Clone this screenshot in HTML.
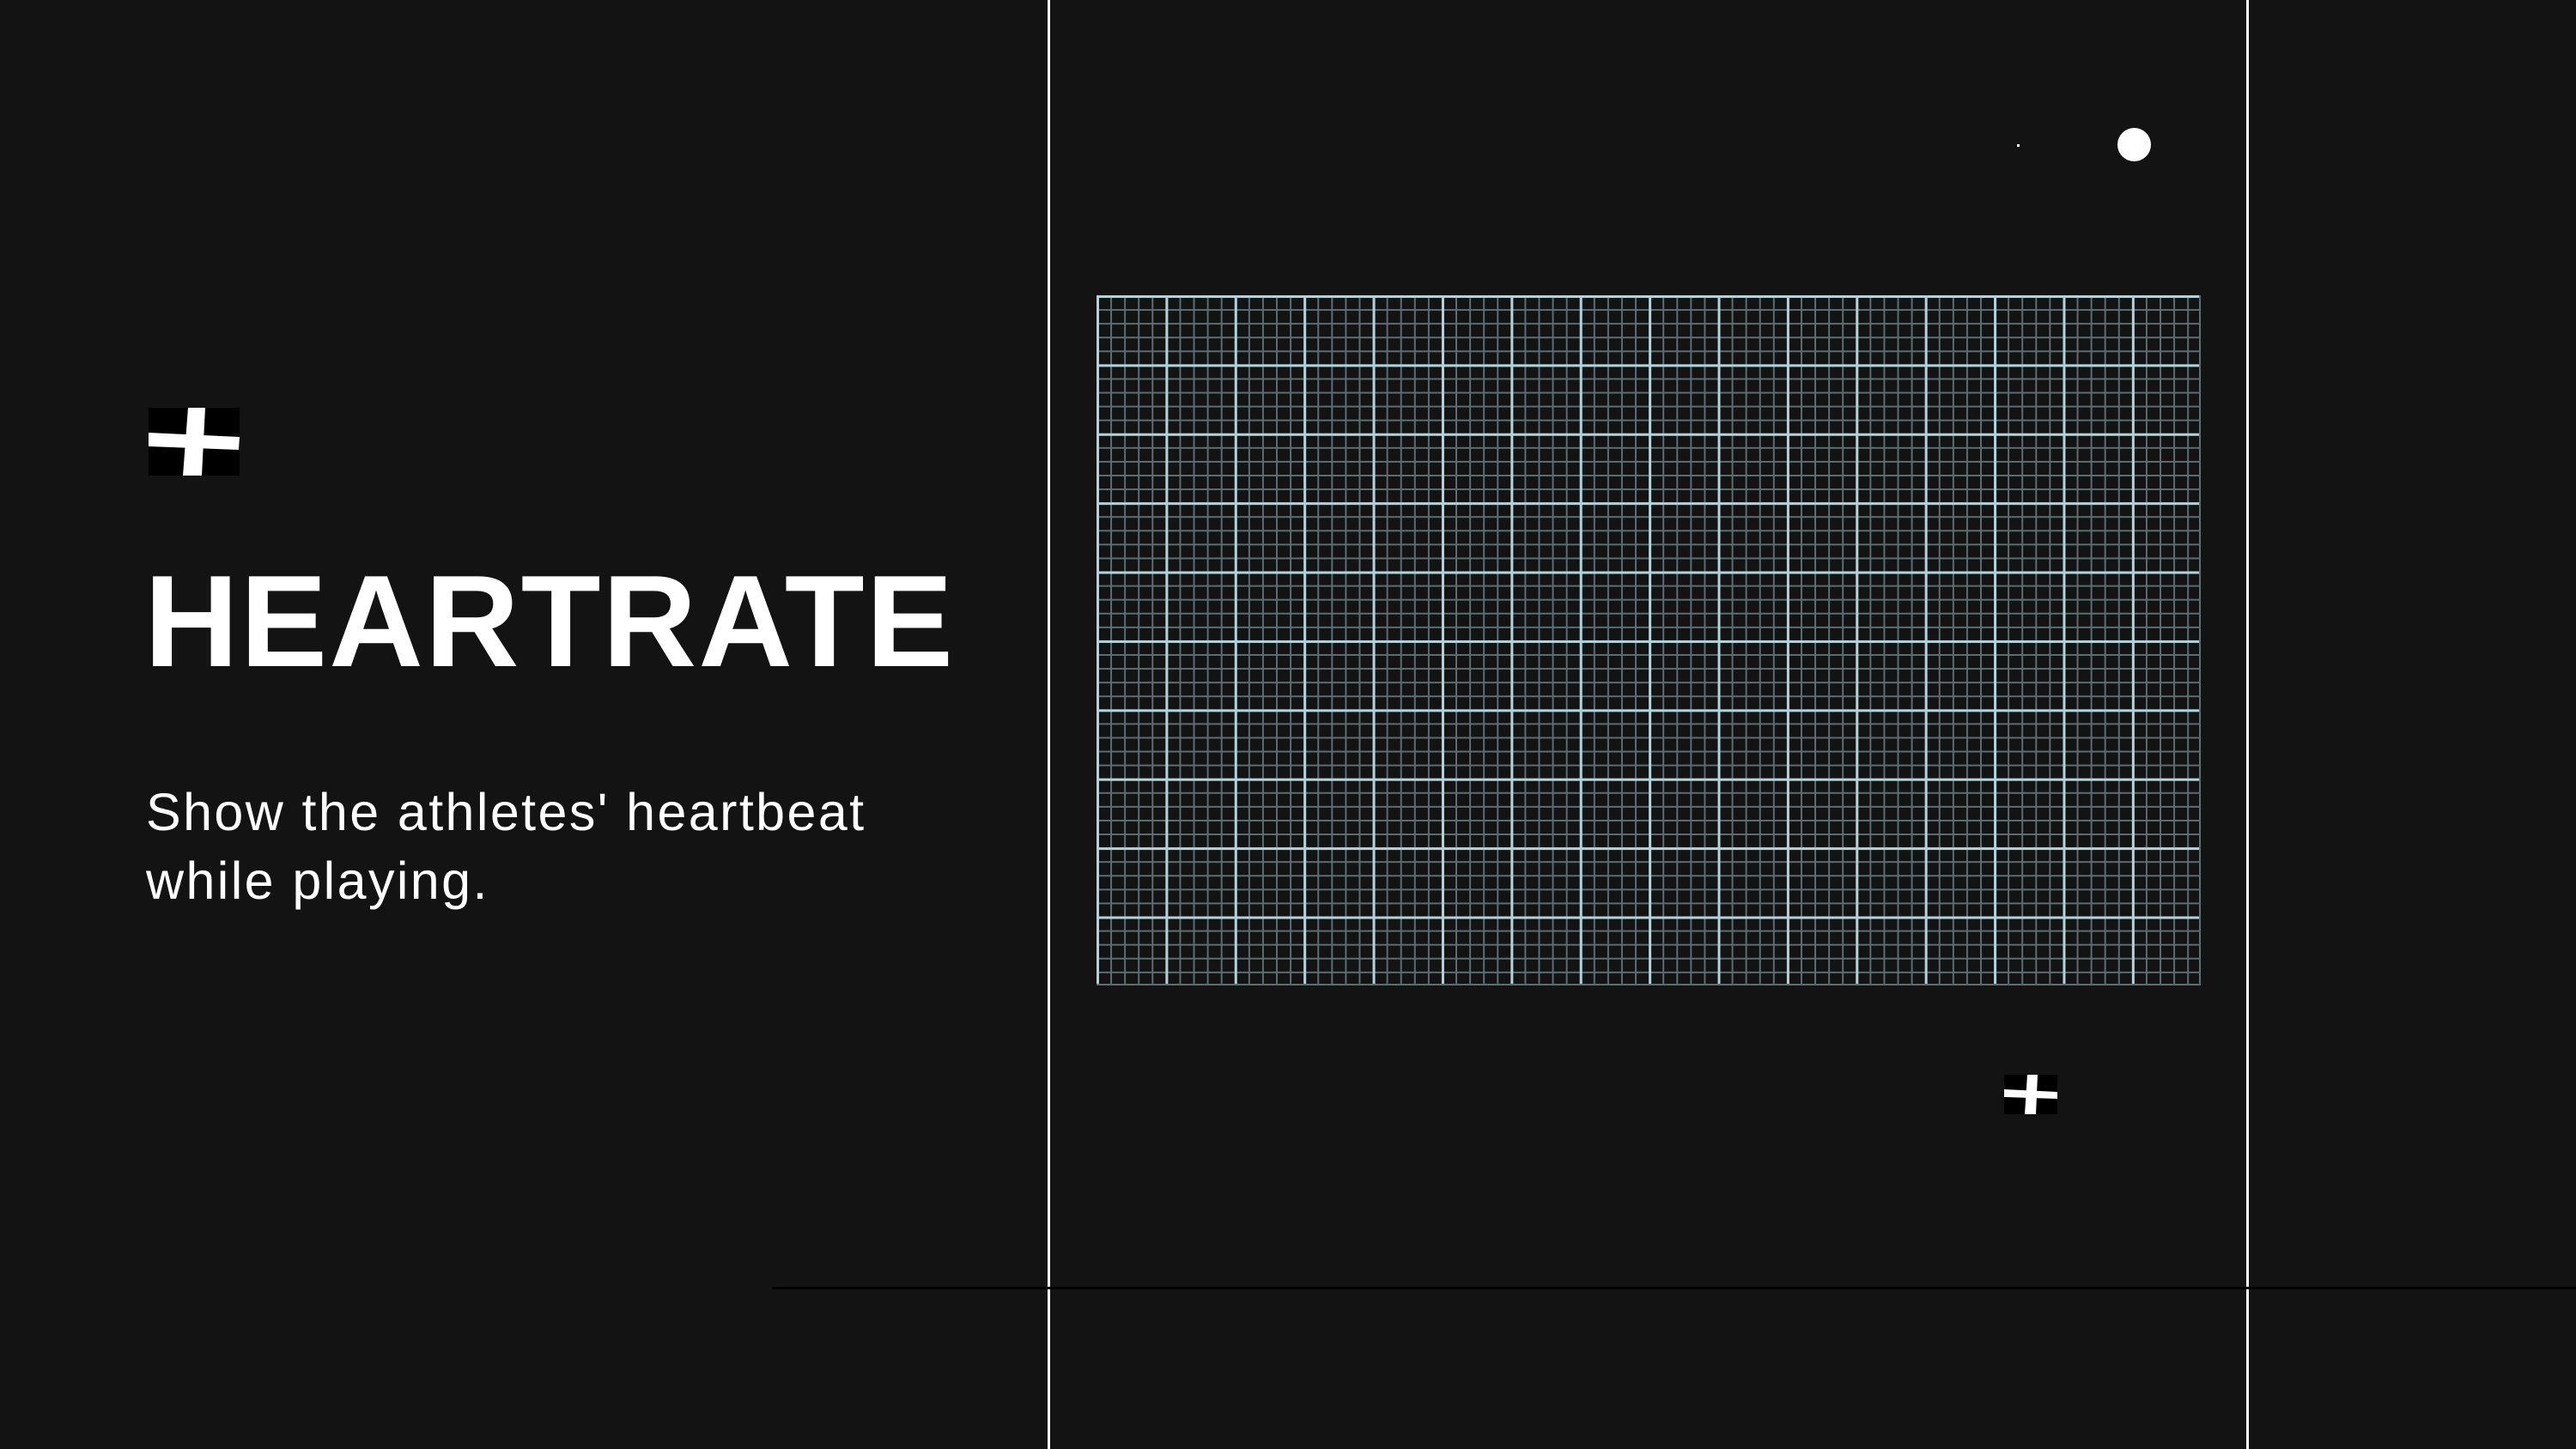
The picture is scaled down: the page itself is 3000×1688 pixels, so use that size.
<!DOCTYPE html>
<html><head><style>
html,body{margin:0;padding:0;background:#131313;width:3000px;height:1688px;overflow:hidden;position:relative;font-family:"Liberation Sans",sans-serif;}
.a{position:absolute}
.grid{left:1277px;top:344px;width:1286px;height:804px;
background-image:
linear-gradient(to right,#b0d3db 3px,transparent 3px),
linear-gradient(to bottom,#b0d3db 3px,transparent 3px),
linear-gradient(to right,#5d6e73 2px,transparent 2px),
linear-gradient(to bottom,#5d6e73 2px,transparent 2px);
background-size:80.4px 80.4px,80.4px 80.4px,16.08px 16.08px,16.08px 16.08px;
border-right:2px solid #5d6e73;border-bottom:2px solid #5d6e73;box-sizing:border-box;}
</style></head><body>
<div class="a" style="left:1220px;top:0;width:3px;height:1688px;background:#fff"></div>
<div class="a" style="left:2616px;top:0;width:3px;height:1688px;background:#fff"></div>
<div class="a" style="left:899px;top:1499px;width:2101px;height:3px;background:#000"></div>
<div class="a grid"></div>
<div class="a" style="left:2466px;top:149px;width:39px;height:39px;border-radius:50%;background:#fff"></div>
<div class="a" style="left:2349px;top:168px;width:3px;height:3px;background:#fff"></div>
<svg class="a" style="left:173px;top:475px" width="106" height="79" viewBox="0 0 106 79">
<rect width="106" height="79" fill="#000"/>
<polygon points="46,0 66,0 62,79 40,79" fill="#fff"/>
<polygon points="0,29 106,34 105,49 0,45" fill="#fff"/>
</svg>
<svg class="a" style="left:2334px;top:1252px" width="62" height="46" viewBox="0 0 62 46">
<rect width="62" height="46" fill="#000"/>
<polygon points="27,0 39,0 37,46 24,46" fill="#fff"/>
<polygon points="0,17 62,20 62,28 0,26" fill="#fff"/>
</svg>
<div class="a" style="left:168px;top:634px;color:#fff;font-weight:bold;font-size:152px;line-height:180px;letter-spacing:2px;white-space:nowrap">HEARTRATE</div>
<div class="a" style="left:170px;top:906px;color:#fff;font-size:61px;line-height:80px;letter-spacing:2.4px;white-space:nowrap">Show the athletes' heartbeat<br>while playing.</div>
</body></html>
